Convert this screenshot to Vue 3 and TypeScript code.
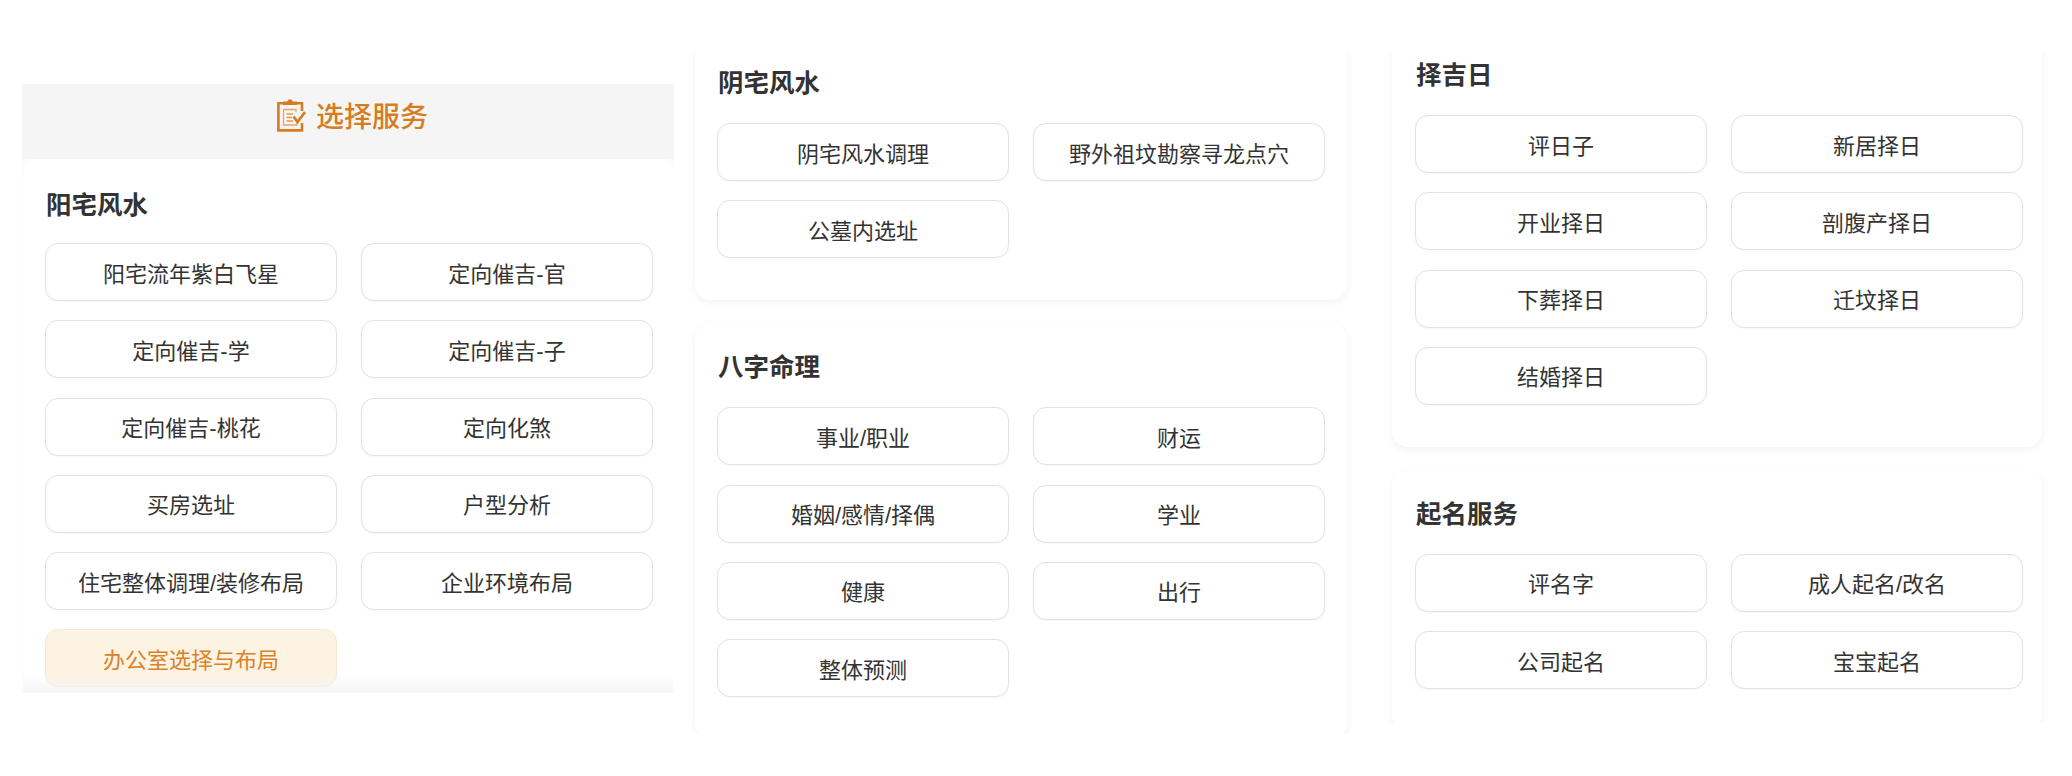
<template>
  <div class="page">
    <!-- 左栏 -->
    <section class="panel panel-left">
      <header class="panel-head">
        <svg class="head-icon" viewBox="0 0 29 34" width="29" height="34" fill="none">
          <path d="M10.5 3.4 C10.7 0.6 15.3 0.6 15.5 3.4 H20 V7 H6 V3.4 Z" fill="#d67d22" />
          <path d="M6 5.2 H1.4 V32.4 H25 V25 M20 5.2 H25 V13" stroke="#d67d22" stroke-width="2.6" />
          <path d="M6.5 11.5 H19 V14 M6.5 11.5 V27 H20 V24" stroke="#e6a765" stroke-width="1.3" />
          <path d="M9.5 16 H16 M9.5 19.5 H15 M9.5 23 H16" stroke="#e29a50" stroke-width="1.5" />
          <path d="M16.5 18.5 L20.5 24 L28 14" stroke="#d67d22" stroke-width="2.8" />
        </svg>
        <span>选择服务</span>
      </header>
      <div class="panel-body">
        <ServiceCard v-bind="groups[0]" />
      </div>
    </section>

    <!-- 中栏 -->
    <section class="panel panel-mid">
      <ServiceCard v-bind="groups[1]" />
      <ServiceCard v-bind="groups[2]" />
    </section>

    <!-- 右栏 -->
    <section class="panel panel-right">
      <ServiceCard v-bind="groups[3]" />
      <ServiceCard v-bind="groups[4]" />
    </section>
  </div>
</template>

<script setup lang="ts">
import { defineComponent, h } from 'vue'

interface Group {
  title: string
  items: string[]
  active?: string
}

const groups: Group[] = [
  {
    title: '阳宅风水',
    items: [
      '阳宅流年紫白飞星',
      '定向催吉-官',
      '定向催吉-学',
      '定向催吉-子',
      '定向催吉-桃花',
      '定向化煞',
      '买房选址',
      '户型分析',
      '住宅整体调理/装修布局',
      '企业环境布局',
      '办公室选择与布局'
    ],
    active: '办公室选择与布局'
  },
  {
    title: '阴宅风水',
    items: ['阴宅风水调理', '野外祖坟勘察寻龙点穴', '公墓内选址']
  },
  {
    title: '八字命理',
    items: ['事业/职业', '财运', '婚姻/感情/择偶', '学业', '健康', '出行', '整体预测']
  },
  {
    title: '择吉日',
    items: ['评日子', '新居择日', '开业择日', '剖腹产择日', '下葬择日', '迁坟择日', '结婚择日']
  },
  {
    title: '起名服务',
    items: ['评名字', '成人起名/改名', '公司起名', '宝宝起名']
  }
]

const ServiceCard = defineComponent({
  props: {
    title: { type: String, required: true },
    items: { type: Array as () => string[], required: true },
    active: { type: String, default: '' }
  },
  setup(props) {
    return () =>
      h('div', { class: 'card' }, [
        h('h3', { class: 'card-title' }, props.title),
        h(
          'div',
          { class: 'card-grid' },
          props.items.map((item) =>
            h('div', { class: ['svc-btn', { 'is-active': item === props.active }], key: item }, item)
          )
        )
      ])
  }
})
</script>

<style>
html,
body {
  margin: 0;
  background: #fff;
}

.card {
  background: #fff;
  border-radius: 16px;
  box-shadow: 0 3px 8px rgba(0, 0, 0, 0.05);
  padding: 26px 19px 42px 23px;
  box-sizing: border-box;
}

.card + .card {
  margin-top: 23px;
}

.panel-mid > .card {
  padding-left: 22px;
}

.panel-body > .card {
  margin-left: 1px;
  padding: 28px 19px 42px 22px;
  box-shadow: none;
}

.panel-body .card-title {
  margin-bottom: 20px;
}

.card-title {
  margin: 0 0 22px;
  padding-left: 1px;
  font-size: 25.5px;
  line-height: 36px;
  font-weight: 700;
  color: #333;
}

.card-grid {
  display: grid;
  grid-template-columns: 292px 292px;
  column-gap: 24px;
  row-gap: 19.3px;
}

.svc-btn {
  height: 58px;
  box-sizing: border-box;
  padding-bottom: 1px;
  border: 1.5px solid #e2e2e2;
  border-radius: 13px;
  background: #fff;
  box-shadow: 0 1px 2px rgba(0, 0, 0, 0.03);
  color: #333;
  font-size: 22px;
  display: flex;
  align-items: center;
  justify-content: center;
}

.svc-btn.is-active {
  background: #fdf3e3;
  border-color: #f8e8d0;
  color: #d9822b;
}
</style>

<style scoped>
.page {
  width: 2072px;
  height: 776px;
  overflow: hidden;
  display: flex;
  align-items: flex-start;
  font-family: "Liberation Sans", "Noto Sans CJK SC", sans-serif;
}

.panel {
  width: 652px;
  flex: none;
  overflow: hidden;
}

.panel-left {
  margin: 84px 0 0 22px;
  height: 609px;
}

.panel-head {
  height: 75px;
  box-sizing: border-box;
  padding: 0 0 14px 9px;
  background: #f5f5f5;
  display: flex;
  align-items: center;
  justify-content: center;
  gap: 10px;
  color: #d67d22;
  font-size: 28px;
  font-weight: 500;
}

.panel-body {
  position: relative;
  height: 534px;
  overflow: hidden;
  background: #fcfcfc;
}

/* 底部渐变遮罩 */
.panel-body::after {
  content: "";
  position: absolute;
  left: 0;
  right: 0;
  bottom: 0;
  height: 18px;
  background: linear-gradient(to bottom, rgba(245, 245, 245, 0), #f5f5f5);
}

.panel-mid {
  margin: 50px 0 0 13px;
  padding: 0 8px;
  height: 683px;
}

.panel-mid > :first-child {
  margin-top: -11px;
}

.panel-right {
  margin: 52px 0 0 29px;
  padding: 0 8px;
  width: 650px;
  height: 671px;
}

.panel-right > :first-child {
  margin-top: -21px;
}
</style>
